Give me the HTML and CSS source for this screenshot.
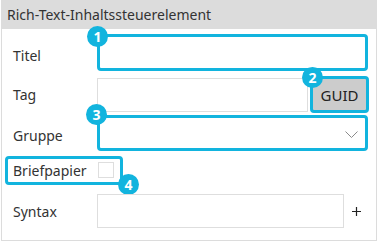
FILE: index.html
```html
<!DOCTYPE html>
<html lang="de">
<head>
    <meta charset="UTF-8">
    <title>Rich-Text-Inhaltssteuerelement</title>
    <link rel="stylesheet" href="styles.css">
</head>
<body>
    <div class="panel">
        <div class="panel-header">Rich-Text-Inhaltssteuerelement</div>
        <div class="panel-body">
            <div class="row row-title">
                <label class="label">Titel</label>
                <div class="field marked title-field">
                    <span class="badge badge-1">1</span>
                </div>
            </div>

            <div class="row row-tag">
                <label class="label">Tag</label>
                <div class="field tag-field"></div>
                <div class="guid-btn">
                    GUID
                    <span class="badge badge-2">2</span>
                </div>
            </div>

            <div class="row row-group">
                <label class="label">Gruppe</label>
                <div class="field marked group-field">
                    <svg class="chevron" width="13" height="7" viewBox="0 0 13 7">
                        <path d="M0.5 0.5 L6.5 6.5 L12.5 0.5" fill="none" stroke="#8a8a8a" stroke-width="1"/>
                    </svg>
                    <span class="badge badge-3">3</span>
                </div>
            </div>

            <div class="row row-letter">
                <div class="letter-box">
                    <span class="letter-label">Briefpapier</span>
                    <span class="checkbox"></span>
                    <span class="badge badge-4">4</span>
                </div>
            </div>

            <div class="row row-syntax">
                <label class="label">Syntax</label>
                <div class="field syntax-field"></div>
                <svg class="plus" width="11" height="11" viewBox="0 0 11 11">
                    <path d="M5.5 1 V10 M1 5.5 H10" stroke="#222" stroke-width="1.2"/>
                </svg>
            </div>
        </div>
    </div>
</body>
</html>
```

FILE: styles.css
```css
body {
    margin: 0;
    font-family: "Noto Sans", "Open Sans", sans-serif;
    font-size: 14px;
    color: #333;
    background-color: #fff;
}
.panel {
    width: 374px;
    margin-left: 1px;
    border: 1px solid #dcdcdc;
    border-top: none;
}
.panel-header {
    height: 29px;
    line-height: 29px;
    padding-left: 5px;
    background-color: #dcdcdc;
    color: #333;
}
.panel-body {
    padding: 2px 0 7px 0;
}
.row {
    display: flex;
    align-items: center;
}
.label {
    width: 84px;
    padding-left: 11px;
}
.field {
    position: relative;
    box-sizing: border-box;
    border: 1px solid #dedede;
    background-color: #fff;
}
.marked {
    border: 3px solid #12b4de;
    border-radius: 4px;
}
.row-title {
    height: 43px;
}
.row-title .label {
    padding-top: 6px;
}
.title-field {
    width: 271px;
    height: 37px;
}
.row-tag {
    height: 41px;
}
.tag-field {
    width: 211px;
    height: 34px;
}
.guid-btn {
    position: relative;
    box-sizing: border-box;
    width: 59px;
    height: 37px;
    margin-left: 2px;
    border: 3px solid #12b4de;
    border-radius: 4px;
    background-color: #cccccc;
    color: #222;
    font-size: 15px;
    display: flex;
    align-items: center;
    justify-content: center;
}
.row-group {
    height: 36px;
}
.row-group .label {
    padding-top: 4px;
}
.group-field {
    width: 271px;
    height: 36px;
}
.chevron {
    position: absolute;
    right: 7px;
    top: 13px;
}
.row-letter {
    height: 38px;
}
.letter-box {
    position: relative;
    box-sizing: border-box;
    display: flex;
    align-items: center;
    justify-content: space-between;
    width: 118px;
    height: 29px;
    margin-left: 3px;
    padding: 0 6px 0 5px;
    border: 3px solid #12b4de;
    border-radius: 4px;
}
.checkbox {
    box-sizing: border-box;
    width: 16px;
    height: 16px;
    border: 1px solid #dedede;
    background-color: #fff;
}
.row-syntax {
    height: 44px;
}
.syntax-field {
    width: 247px;
    height: 34px;
}
.plus {
    margin-left: 7px;
}
.badge {
    position: absolute;
    width: 21px;
    height: 21px;
    border-radius: 50%;
    background-color: #12b4de;
    color: #fff;
    font-size: 14px;
    font-weight: bold;
    line-height: 21px;
    text-align: center;
}
.badge-1 {
    left: -13px;
    top: -11px;
}
.badge-2 {
    left: -11px;
    top: -12px;
}
.badge-3 {
    left: -14px;
    top: -14px;
}
.badge-4 {
    left: 110px;
    top: 15px;
}
```
